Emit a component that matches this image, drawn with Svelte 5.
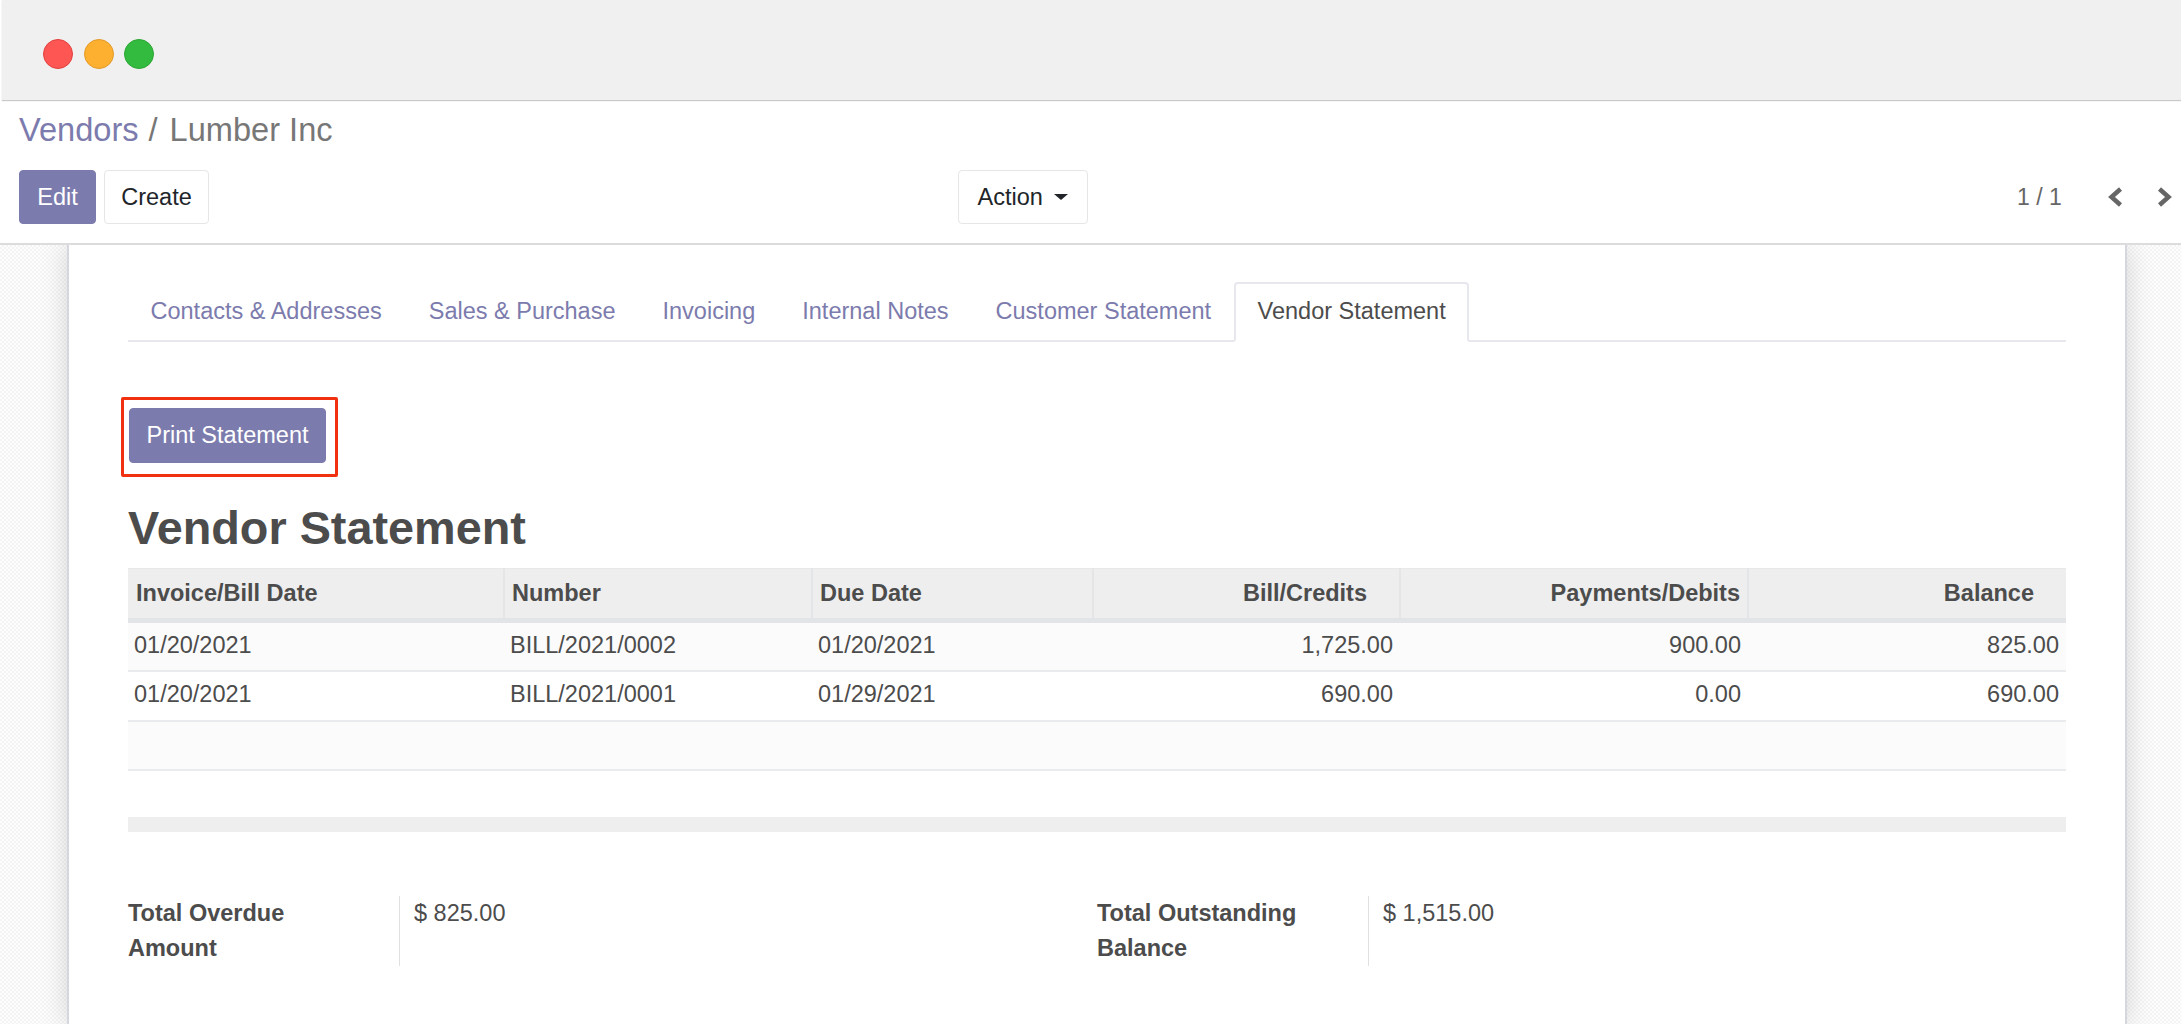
<script>
  const tabs = ['Contacts & Addresses', 'Sales & Purchase', 'Invoicing', 'Internal Notes', 'Customer Statement'];
  const rows = [
    { date: '01/20/2021', number: 'BILL/2021/0002', due: '01/20/2021', bill: '1,725.00', paid: '900.00', balance: '825.00' },
    { date: '01/20/2021', number: 'BILL/2021/0001', due: '01/29/2021', bill: '690.00', paid: '0.00', balance: '690.00' }
  ];
</script>

<div class="page">
  <div class="titlebar">
    <span class="dot red"></span>
    <span class="dot amber"></span>
    <span class="dot green"></span>
  </div>

  <div class="control-panel">
    <div class="breadcrumb">
      <a href="#vendors">Vendors</a>
      <span class="sep">/</span>
      <span class="current">Lumber Inc</span>
    </div>
    <div class="actions">
      <div class="left-buttons">
        <button class="btn primary edit">Edit</button>
        <button class="btn secondary create">Create</button>
      </div>
      <button class="btn secondary action">Action <span class="caret"></span></button>
      <div class="pager">
        <span class="pager-count">1 / 1</span>
        <svg class="chevron prev" viewBox="0 0 16 22" aria-hidden="true"><path d="M13.5 3 L4.5 11 L13.5 19" /></svg>
        <svg class="chevron next" viewBox="0 0 16 22" aria-hidden="true"><path d="M2.5 3 L11.5 11 L2.5 19" /></svg>
      </div>
    </div>
  </div>

  <div class="canvas">
    <div class="sheet">
      <ul class="tabs">
        {#each tabs as tab}
          <li class="tab">{tab}</li>
        {/each}
        <li class="tab active">Vendor Statement</li>
      </ul>

      <div class="highlight">
        <button class="btn primary print">Print Statement</button>
      </div>

      <h1>Vendor Statement</h1>

      <table>
        <colgroup>
          <col style="width: 376px" />
          <col style="width: 308px" />
          <col style="width: 281px" />
          <col style="width: 307px" />
          <col style="width: 348px" />
          <col style="width: 318px" />
        </colgroup>
        <thead>
          <tr>
            <th>Invoice/Bill Date</th>
            <th>Number</th>
            <th>Due Date</th>
            <th class="num bill-head">Bill/Credits</th>
            <th class="num">Payments/Debits</th>
            <th class="num balance-head">Balance</th>
          </tr>
        </thead>
        <tbody>
          {#each rows as row}
            <tr>
              <td>{row.date}</td>
              <td>{row.number}</td>
              <td>{row.due}</td>
              <td class="num">{row.bill}</td>
              <td class="num">{row.paid}</td>
              <td class="num">{row.balance}</td>
            </tr>
          {/each}
          <tr class="empty"><td colspan="6"></td></tr>
        </tbody>
      </table>

      <div class="band"></div>

      <div class="totals">
        <div class="total">
          <div class="total-label">Total Overdue Amount</div>
          <div class="total-value">$ 825.00</div>
        </div>
        <div class="total">
          <div class="total-label">Total Outstanding Balance</div>
          <div class="total-value">$ 1,515.00</div>
        </div>
      </div>
    </div>
  </div>
</div>

<style>
  :global(body) {
    margin: 0;
    background: #fff;
  }

  .page {
    height: 1024px;
    overflow: hidden;
    display: flex;
    flex-direction: column;
    font-family: "Liberation Sans", Arial, sans-serif;
    font-size: 23.5px;
    color: #4c4c4c;
  }

  .titlebar {
    height: 100px;
    box-sizing: border-box;
    margin-left: 2px;
    padding: 8px 0 0 41px;
    display: flex;
    align-items: center;
    gap: 10.5px;
    background: #f0f0f0;
    box-shadow: 0 1px 1px #c9c9c9;
  }

  .dot {
    width: 30px;
    height: 30px;
    box-sizing: border-box;
    border-radius: 50%;
    border: 1.5px solid;
  }
  .red { background: #fd5653; border-color: #e2403e; }
  .amber { background: #fdb02f; border-color: #e29a2a; }
  .green { background: #32bb3f; border-color: #2ca635; }

  .control-panel {
    height: 145px;
    box-sizing: border-box;
    padding: 12px 0 0 19px;
    border-bottom: 2px solid #dcdcdc;
    flex: none;
  }

  .breadcrumb {
    height: 58px;
    font-size: 32.6px;
    line-height: 36px;
    display: flex;
    gap: 10px;
  }
  .breadcrumb a {
    color: #7c7bad;
    text-decoration: none;
  }
  .breadcrumb .sep {
    margin-right: 2px;
    color: #777;
  }
  .breadcrumb .current {
    color: #777;
  }

  .actions {
    display: flex;
    align-items: center;
    height: 54px;
  }

  .left-buttons {
    display: flex;
    gap: 8px;
    width: 939px;
  }

  .btn {
    height: 54px;
    box-sizing: border-box;
    padding: 0;
    border-radius: 4px;
    font: inherit;
    font-size: 23.5px;
  }
  .primary {
    background: #7c7bad;
    border: 1px solid #7c7bad;
    color: #fff;
  }
  .secondary {
    background: #fff;
    border: 1px solid #e6e6e6;
    color: #212529;
  }
  .edit { width: 77px; }
  .create { width: 105px; }
  .action { width: 130px; }

  .caret {
    display: inline-block;
    width: 0;
    height: 0;
    margin-left: 5px;
    vertical-align: 5px;
    border-top: 6px solid #212529;
    border-left: 7px solid transparent;
    border-right: 7px solid transparent;
  }

  .pager {
    margin-left: 929px;
    display: flex;
    align-items: center;
    flex: none;
    color: #666;
  }
  .pager-count {
    width: 45px;
    white-space: nowrap;
    font-size: 23px;
    margin-right: 45px;
  }
  .chevron {
    width: 16px;
    height: 22px;
    flex: none;
  }
  .chevron path {
    fill: none;
    stroke: #666;
    stroke-width: 4.5;
  }
  .next { margin-left: 34px; }

  .canvas {
    flex: 1;
    min-height: 0;
    overflow: hidden;
    padding: 0 54px 0 67px;
    background-color: #fafafa;
    background-image: conic-gradient(#f4f4f4 25%, #fdfdfd 0 50%, #f4f4f4 0 75%, #fdfdfd 0);
    background-size: 4px 4px;
  }

  .sheet {
    height: 100%;
    box-sizing: border-box;
    padding: 37px 59px 0 59px;
    background: #fff;
    border: solid #d6d6de;
    border-width: 0 2px;
    box-shadow: 0 0 26px rgba(0, 0, 0, 0.15);
  }

  .tabs {
    list-style: none;
    display: flex;
    margin: 0;
    padding: 0;
    height: 60px;
    box-sizing: border-box;
    border-bottom: 2px solid #e6e8ee;
  }
  .tab {
    height: 60px;
    box-sizing: border-box;
    padding: 0 23.5px;
    line-height: 58px;
    white-space: nowrap;
    color: #7c7bad;
  }
  .tab:first-child {
    margin-left: -1px;
  }
  .tab.active {
    margin-left: -1px;
    color: #4c4c4c;
    background: #fff;
    border: 2px solid #e6e8ee;
    border-bottom-color: #fff;
    border-radius: 4px 4px 0 0;
    padding: 0 21.5px 0 22px;
    line-height: 55px;
  }

  .highlight {
    width: fit-content;
    margin: 55px 0 0 -7px;
    padding: 8px 9px 11px 5px;
    border: 3px solid #f0300f;
    border-radius: 2px;
  }
  .print {
    display: block;
    width: 197px;
    height: 55px;
  }

  h1 {
    margin: 19px 0 0;
    font-size: 46.8px;
    line-height: 65px;
    font-weight: 700;
    color: #4c4c4c;
  }

  table {
    width: 1938px;
    margin-top: 7px;
    border-collapse: collapse;
    table-layout: fixed;
  }
  th {
    height: 52px;
    padding: 0 7px;
    box-sizing: border-box;
    font-weight: 700;
    text-align: left;
    background: #eee;
    border-left: 2px solid #e4e5e6;
    border-bottom: 5px solid #e2e4e7;
    border-top: 1px solid #e8e8e8;
  }
  th:first-child { border-left: 0; padding-left: 8px; }
  td {
    height: 50px;
    padding: 0 7px 2px 6px;
    box-sizing: border-box;
    border-bottom: 2px solid #e9ebef;
  }
  tbody tr:nth-child(odd) td { background: #fbfbfb; }
  .num { text-align: right; }
  .bill-head { padding-right: 32px; }
  .balance-head { padding-right: 32px; }
  .empty td { height: 49px; }

  .band {
    height: 15px;
    margin-top: 46px;
    background: #eee;
  }

  .totals {
    display: flex;
    margin-top: 64px;
  }
  .total {
    display: flex;
    width: 969px;
    height: 70px;
  }
  .total-label {
    width: 272px;
    height: 70px;
    box-sizing: border-box;
    padding-right: 60px;
    font-weight: 700;
    line-height: 35px;
    border-right: 1px solid #e0e0e0;
  }
  .total-value {
    padding-left: 14px;
    line-height: 35px;
  }
</style>
